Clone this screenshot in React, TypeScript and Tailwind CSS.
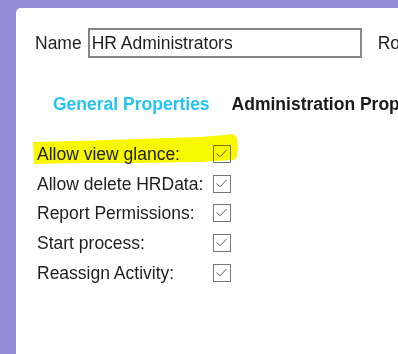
import React from "react";

const rows = [
  "Allow view glance:",
  "Allow delete HRData:",
  "Report Permissions:",
  "Start process:",
  "Reassign Activity:",
];

function Check() {
  return (
    <div className="relative w-[18px] h-[18px] border-[1.5px] border-[#777] bg-white">
      <svg className="absolute left-0 top-0" width="15" height="15" viewBox="0 0 15 15">
        <path d="M2.5 7.5 L6 10.8 L12.5 4" fill="none" stroke="#4a4a4a" strokeWidth="0.9" />
      </svg>
    </div>
  );
}

export default function App() {
  return (
    <div
      className="relative w-[398px] h-[354px] bg-[#958fd9] pl-4 pt-2 overflow-hidden text-[#1e1e1e]"
      style={{ fontFamily: '"Liberation Sans", Arial, sans-serif' }}
    >
      <div className="bg-white h-full rounded-tl-[5px] pl-[19px] pt-[20px] overflow-hidden">
        <div className="flex items-center whitespace-nowrap">
          <span className="text-[17.5px] leading-[20px]">Name</span>
          <div className="ml-[6px] w-[274px] h-[30px] shrink-0 border-2 border-[#868686] flex items-center pl-[2px] text-[17.5px]">
            HR Administrators
          </div>
          <span className="ml-[16px] text-[17.5px]">Roles</span>
        </div>
        <div className="mt-[36px] pl-[18px] flex gap-[22px] whitespace-nowrap font-bold text-[17.5px] leading-[20px]">
          <span className="text-[#22c4f2]">General Properties</span>
          <span className="text-[#1a1a1a]">Administration Properties</span>
        </div>
        <div className="mt-[25px] pl-[2px] flex flex-col">
          {rows.map((r) => (
            <div key={r} className="flex items-center h-[29.75px]">
              <span className="w-[176px] text-[17.5px] whitespace-nowrap">{r}</span>
              <Check />
            </div>
          ))}
        </div>
      </div>
      <svg
        className="absolute left-0 top-0 pointer-events-none mix-blend-multiply"
        width="398"
        height="354"
        viewBox="0 0 398 354"
      >
        <path
          d="M33 142 L80 141 L138 139 L200 137 L225 135 L232 134 Q236 135 237 139 L238 147 L237 156 Q236 160 232 160 L200 162 L140 163 L80 163 L34 164 Z"
          fill="#f8f800"
        />
      </svg>
    </div>
  );
}
